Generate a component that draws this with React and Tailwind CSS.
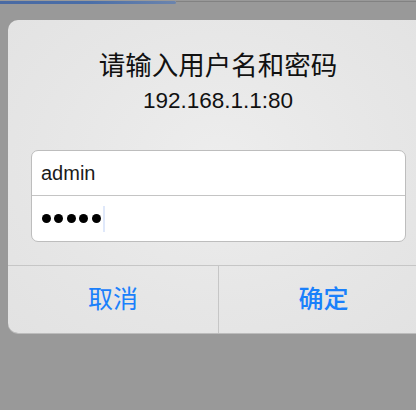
export default function App() {
  const cjk = { fontFamily: '"Liberation Sans", "Noto Sans CJK SC", sans-serif' };
  return (
    <div className="w-[416px] h-[410px] bg-[#999999] overflow-hidden" style={cjk}>
      <div className="h-[4px] flex items-start">
        <div className="w-[176px] h-[3px] mt-[1px] rounded-r-[2px] bg-gradient-to-r from-[#4a6aa3] via-[#4a6ea8] to-[#6b84ad]" />
        <div className="flex-1 h-[1px] mt-[1px] bg-[#828282]" />
      </div>
      <div className="mt-[16px] ml-[8px] w-[420px] rounded-[10px] bg-[radial-gradient(ellipse_at_50%_45%,#ededed_0%,#e6e6e6_60%,#e2e2e2_100%)] shadow-[0_1px_0_#bcbcbc] flex flex-col">
        <div className="pt-[31px] flex flex-col items-center">
          <div className="text-[26.5px] leading-[30px] text-[#111111]">请输入用户名和密码</div>
          <div className="mt-[7px] text-[22.5px] leading-[26px] text-[#111111]">192.168.1.1:80</div>
        </div>
        <div className="mt-[36px] ml-[23px] w-[375px] rounded-[7px] border border-[#bdbdbd] bg-white flex flex-col">
          <div className="h-[45px] flex items-center pl-[9px] text-[20px] text-[#1a1a1a] border-b border-[#c4c4c4]">
            admin
          </div>
          <div className="h-[45px] flex items-center pl-[10px]">
            <div className="flex items-center gap-[3.4px]">
              <div className="w-[9px] h-[9px] rounded-full bg-black" />
              <div className="w-[9px] h-[9px] rounded-full bg-black" />
              <div className="w-[9px] h-[9px] rounded-full bg-black" />
              <div className="w-[9px] h-[9px] rounded-full bg-black" />
              <div className="w-[9px] h-[9px] rounded-full bg-black" />
            </div>
            <div className="ml-[2px] w-[2px] h-[26px] bg-[#dfe8fa]" />
          </div>
        </div>
        <div className="mt-[23px] border-t border-[#c6c6c6] flex h-[68px]">
          <div className="w-[210px] flex items-center justify-center text-[25px] text-[#1a80fb]">取消</div>
          <div className="w-[210px] border-l border-[#c6c6c6] flex items-center justify-center text-[25px] font-medium text-[#1a80fb]">确定</div>
        </div>
      </div>
    </div>
  );
}
